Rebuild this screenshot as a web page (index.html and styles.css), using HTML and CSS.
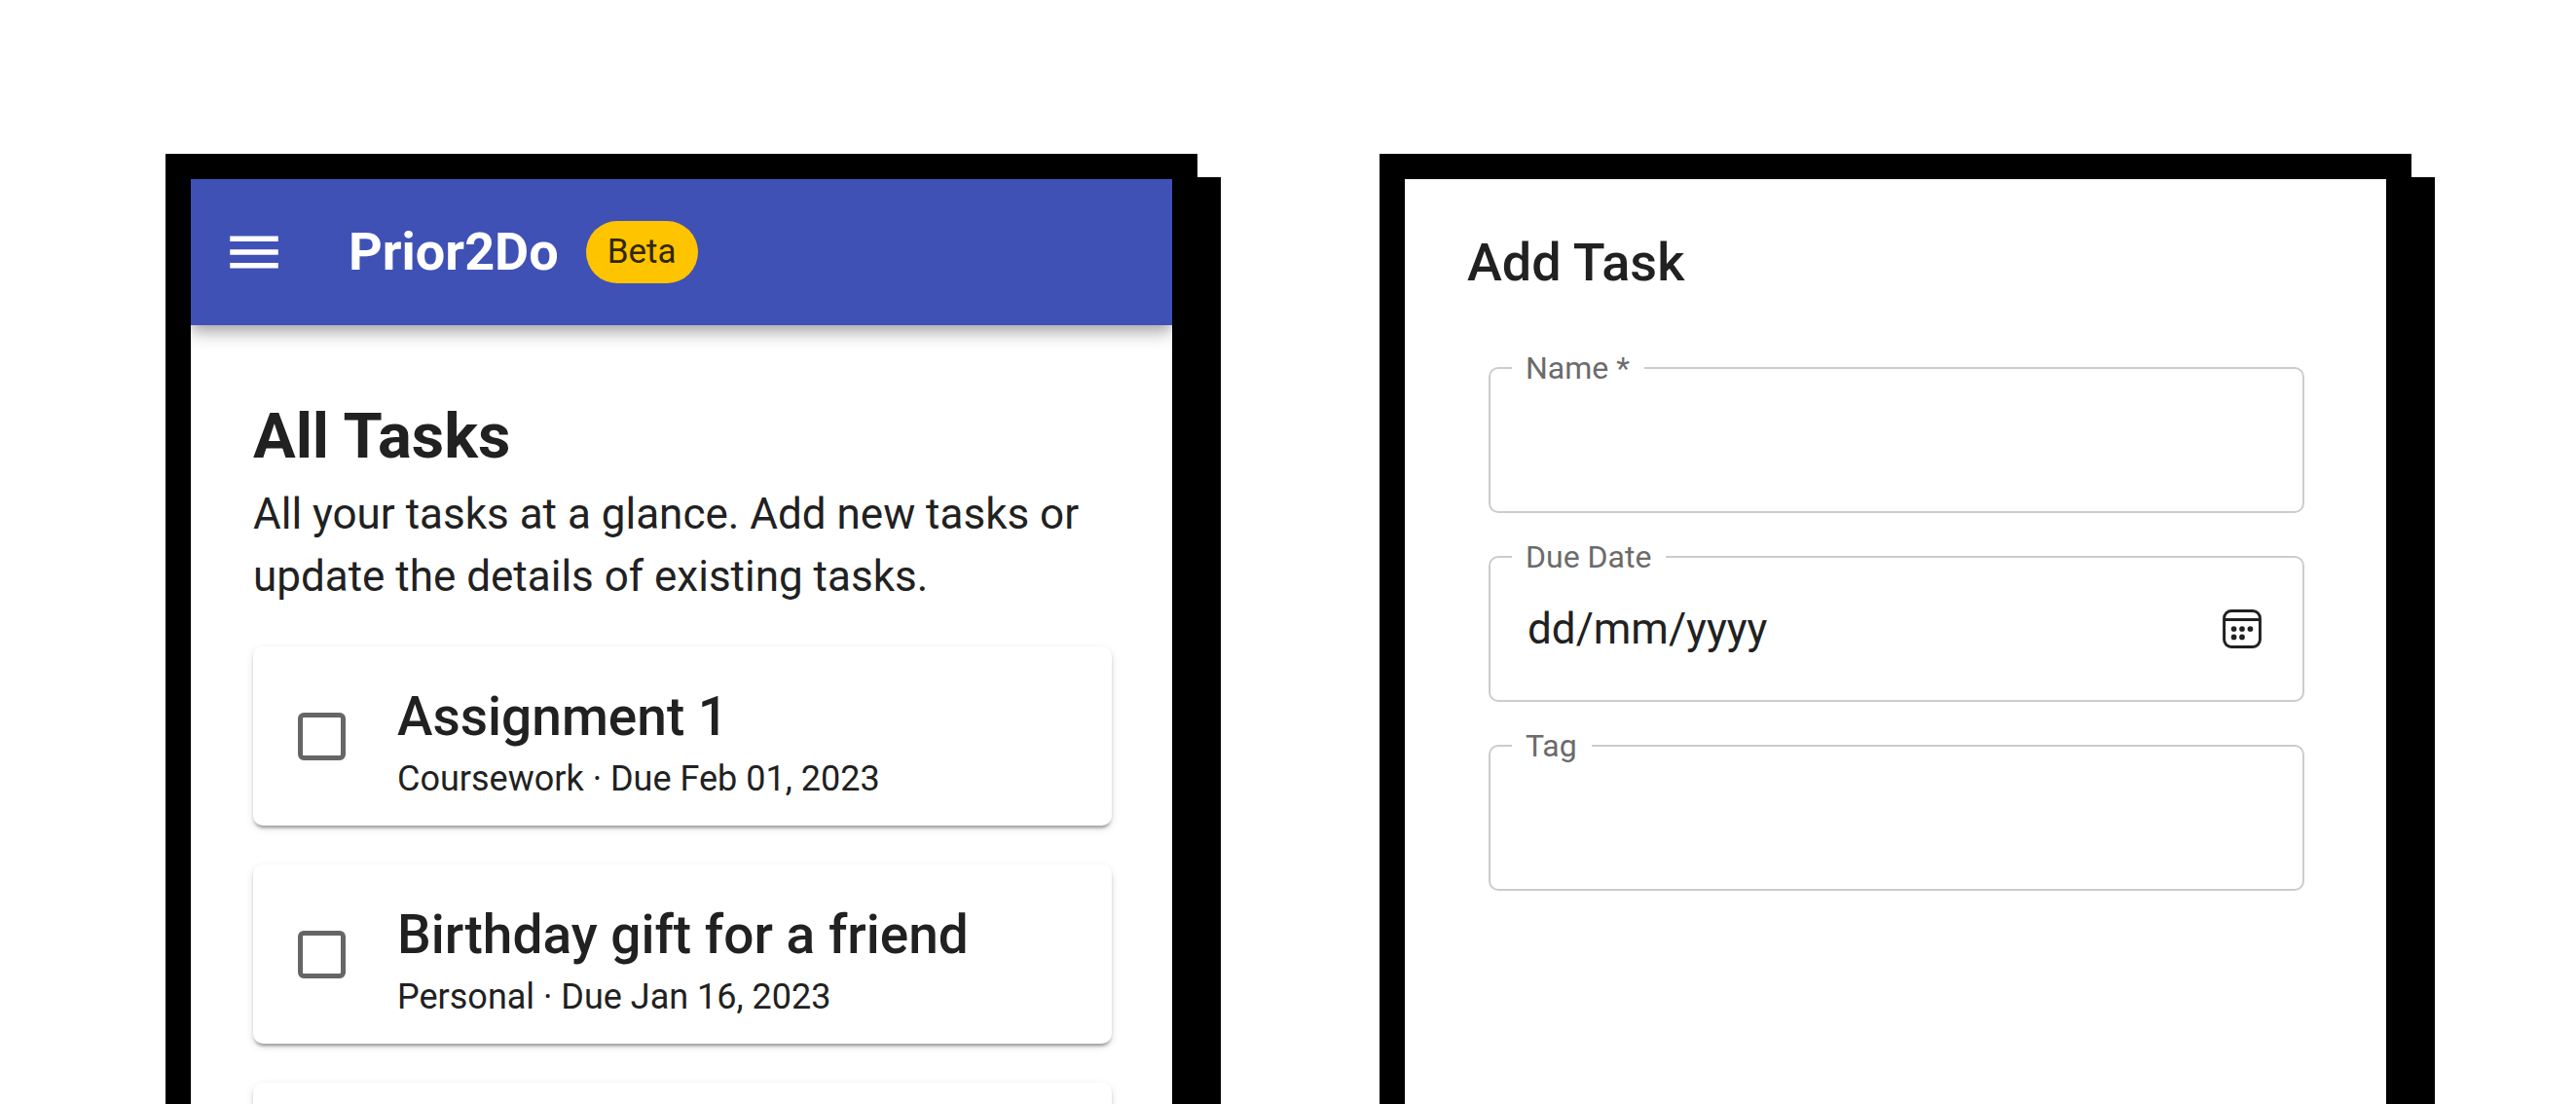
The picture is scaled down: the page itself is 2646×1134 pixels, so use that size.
FILE: index.html
```html
<!DOCTYPE html>
<html lang="en-GB">
<head>
<meta charset="utf-8">
<meta name="viewport" content="width=device-width, initial-scale=1">
<title>Prior2Do</title>
<link rel="stylesheet" href="styles.css">
</head>
<body>
<main class="screens">
  <section class="screen">
    <header class="appbar">
      <button class="menu-button" type="button" aria-label="Menu">
        <svg class="menu-icon" viewBox="0 0 24 24" aria-hidden="true"><path d="M3 18h18v-2H3v2zm0-5h18v-2H3v2zm0-7v2h18V6H3z"/></svg>
      </button>
      <h1 class="brand">Prior2Do</h1>
      <span class="badge">Beta</span>
    </header>
    <div class="content">
      <h2 class="heading">All Tasks</h2>
      <p class="intro">All your tasks at a glance. Add new tasks or update the details of existing tasks.</p>
      <ul class="tasks">
        <li class="card">
          <input class="check" type="checkbox" id="task-1">
          <label class="task" for="task-1">
            <span class="task-name">Assignment 1</span>
            <span class="task-meta">Coursework · Due Feb 01, 2023</span>
          </label>
        </li>
        <li class="card">
          <input class="check" type="checkbox" id="task-2">
          <label class="task" for="task-2">
            <span class="task-name">Birthday gift for a friend</span>
            <span class="task-meta">Personal · Due Jan 16, 2023</span>
          </label>
        </li>
        <li class="card"></li>
      </ul>
    </div>
  </section>

  <section class="screen">
    <form class="form">
      <h2 class="form-title">Add Task</h2>
      <div class="fields">
        <fieldset class="field">
          <legend class="legend"><label for="name">Name *</label></legend>
          <input class="input" id="name" type="text" required>
        </fieldset>
        <fieldset class="field">
          <legend class="legend"><label for="due">Due Date</label></legend>
          <input class="input" id="due" type="text" placeholder="dd/mm/yyyy">
          <button class="picker" type="button" aria-label="Choose date">
            <svg class="picker-icon" viewBox="0 0 38 38" aria-hidden="true">
              <rect x="1.5" y="1.5" width="35" height="35" rx="7" fill="none" stroke="currentColor" stroke-width="2.8"/>
              <path d="M2 10h34" stroke="currentColor" stroke-width="2.8"/>
              <circle cx="11" cy="19" r="2.7"/><circle cx="19" cy="19" r="2.7"/><circle cx="27" cy="19" r="2.7"/>
              <circle cx="11" cy="27" r="2.7"/><circle cx="19" cy="27" r="2.7"/>
            </svg>
          </button>
        </fieldset>
        <fieldset class="field">
          <legend class="legend"><label for="tag">Tag</label></legend>
          <input class="input" id="tag" type="text">
        </fieldset>
      </div>
    </form>
  </section>
</main>
</body>
</html>
```
FILE: styles.css
```css
*,
*::before,
*::after {
  box-sizing: border-box;
}

html {
  overflow: hidden;
}

body {
  margin: 0;
  min-height: 100vh;
  background: #fff;
  color: #212121;
  font-family: Roboto, "Liberation Sans", sans-serif;
}

h1,
h2,
p,
ul {
  margin: 0;
  padding: 0;
}

button {
  padding: 0;
  border: 0;
  background: none;
  color: inherit;
}

.screens {
  display: grid;
  grid-template-columns: 1fr 1fr;
  gap: 187px;
  min-height: 100vh;
  padding: 158px 169px 0 170px;
}

.screen {
  min-width: 0;
  border: 26px solid #000;
  background: #fff;
  box-shadow: 24px 24px 0 #000;
}

/* App bar */
.appbar {
  display: flex;
  align-items: center;
  height: 150px;
  padding: 0 32px;
  background: #3f51b5;
  color: #fff;
  box-shadow: 0 5px 11px -3px rgba(0, 0, 0, 0.2), 0 11px 13px rgba(0, 0, 0, 0.14), 0 3px 27px rgba(0, 0, 0, 0.12);
  clip-path: inset(0 0 -48px 0);
}

.menu-button {
  display: flex;
  margin-right: 64px;
}

.menu-icon {
  width: 66px;
  height: 66px;
  fill: currentColor;
}

.brand {
  font-size: 54px;
  font-weight: 700;
  line-height: 64px;
}

.badge {
  margin-left: 28px;
  padding: 0 22px;
  border-radius: 32px;
  background: #ffc400;
  color: #332700;
  font-size: 35px;
  line-height: 64px;
}

/* Task list */
.content {
  padding: 74px 62px 64px 64px;
}

.heading {
  font-size: 65px;
  font-weight: 700;
  line-height: 80px;
}

.intro {
  padding: 8px 0 40px;
  font-size: 44px;
  line-height: 64px;
}

.tasks {
  display: flex;
  flex-direction: column;
  gap: 40px;
  list-style: none;
}

.card {
  display: flex;
  align-items: center;
  gap: 53px;
  min-height: 184px;
  padding: 0 46px;
  border-radius: 10px;
  background: #fff;
  box-shadow: 0 5px 3px -3px rgba(0, 0, 0, 0.2), 0 3px 3px rgba(0, 0, 0, 0.14), 0 3px 8px rgba(0, 0, 0, 0.12);
}

.check {
  appearance: none;
  flex: none;
  width: 49px;
  height: 49px;
  margin: 0;
  border: 5px solid #666;
  border-radius: 6px;
}

.task {
  display: flex;
  flex-direction: column;
  padding-top: 16px;
}

.task-name {
  font-size: 55px;
  font-weight: 500;
  line-height: 72px;
}

.task-meta {
  font-size: 36px;
  line-height: 56px;
}

/* Add task form */
.form {
  padding: 50px 64px;
}

.form-title {
  font-size: 54px;
  font-weight: 500;
  line-height: 72px;
}

.fields {
  display: flex;
  flex-direction: column;
  gap: 25px;
  padding: 52px 20px 0 22px;
}

.field {
  display: flex;
  align-items: center;
  min-width: 0;
  margin: 0;
  padding: 0 42px 19px 38px;
  border: 2px solid #ccc;
  border-radius: 10px;
}

.legend {
  margin-left: -16px;
  padding: 0 15px 0 14px;
  color: #6b6b6b;
  font-size: 32px;
  line-height: 40px;
}

.input {
  flex: 1;
  min-width: 0;
  height: 108px;
  padding: 0;
  border: 0;
  outline: 0;
  background: none;
  color: inherit;
  font: inherit;
  font-size: 44px;
}

.input::placeholder {
  color: inherit;
  opacity: 1;
}

.picker {
  display: flex;
}

.picker-icon {
  width: 40px;
  height: 40px;
  fill: currentColor;
}
```
